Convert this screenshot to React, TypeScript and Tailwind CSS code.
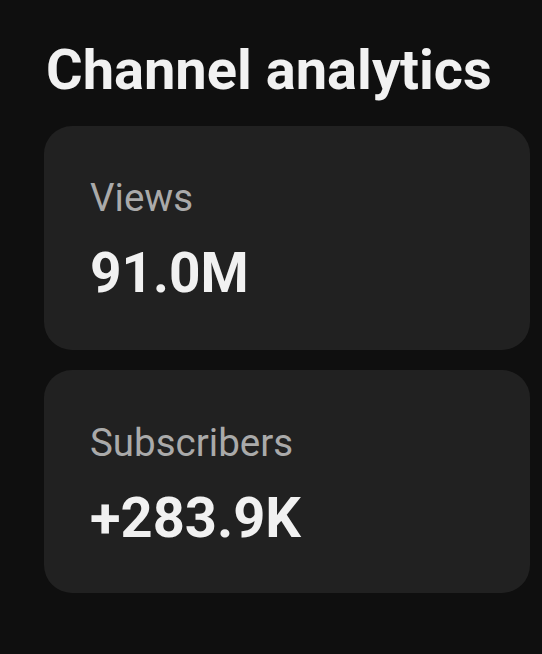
export default function App() {
  return (
    <div className="w-[542px] h-[654px] bg-[#0f0f0f] pl-[44px] pr-[12px] pt-[40px]" style={{ fontFamily: "Roboto, sans-serif" }}>
      <h1 className="text-[56px] leading-[60px] font-bold text-[#f1f1f1] pl-[2px]">Channel analytics</h1>
      <div className="mt-[26px] flex flex-col gap-[20px]">
        <div className="h-[224px] rounded-[28px] bg-[#212121] pl-[46px] pt-[50px]">
          <div className="text-[38.5px] leading-[44px] text-[#aaaaaa]">Views</div>
          <div className="mt-[23px] text-[55px] leading-[60px] font-bold text-[#f1f1f1]">91.0M</div>
        </div>
        <div className="h-[223px] rounded-[28px] bg-[#212121] pl-[46px] pt-[51px]">
          <div className="text-[38.5px] leading-[44px] text-[#aaaaaa]">Subscribers</div>
          <div className="mt-[23px] text-[56px] leading-[60px] font-bold text-[#f1f1f1]">+283.9K</div>
        </div>
      </div>
    </div>
  );
}
